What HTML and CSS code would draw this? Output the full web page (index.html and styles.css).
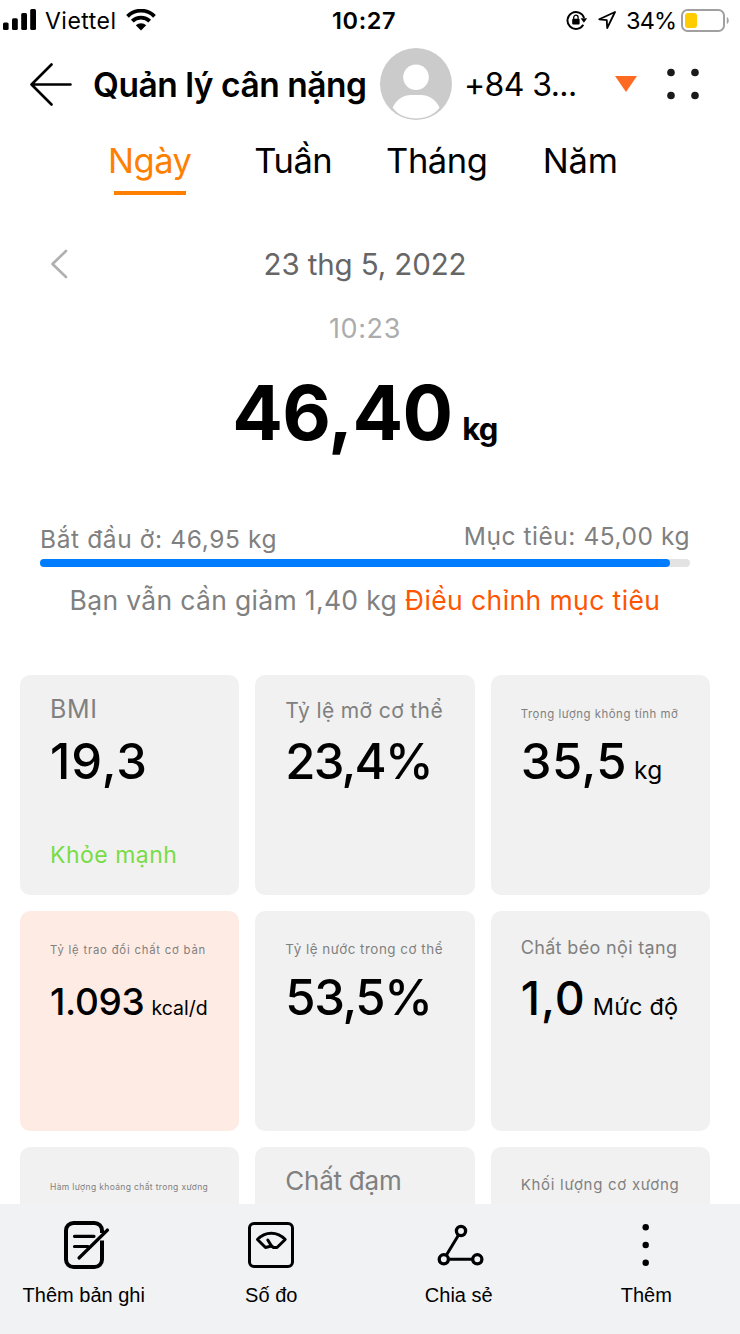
FILE: index.html
```html
<!DOCTYPE html>
<html lang="vi">
<head>
    <meta charset="UTF-8">
    <meta name="viewport" content="width=device-width, initial-scale=1.0">
    <title>Quản lý cân nặng</title>
    <link rel="stylesheet" href="styles.css">
</head>
<body>
    <div class="status-bar">
        <svg class="signal" width="33" height="22" viewBox="0 0 33 22">
            <rect x="0" y="13.5" width="5.6" height="7.5" rx="1.5"/>
            <rect x="9" y="9.3" width="5.8" height="11.7" rx="1.5"/>
            <rect x="18.2" y="4" width="5.8" height="17" rx="1.5"/>
            <rect x="27.2" y="0" width="5.8" height="21" rx="1.5"/>
        </svg>
        <span class="carrier">Viettel</span>
        <svg class="wifi" width="30" height="22" viewBox="0 0 30 22">
            <path d="M1.5 7.3a19 19 0 0 1 27 0M6.3 12.2a12.3 12.3 0 0 1 17.4 0" fill="none" stroke="#000" stroke-width="3.8"/>
            <path d="M15 21.5l-5.2-5.2a7.4 7.4 0 0 1 10.4 0z"/>
        </svg>
        <span class="clock">10:27</span>
        <svg class="rotation-lock" width="22" height="20" viewBox="0 0 22 20">
            <path d="M17.3 14.8A8.5 8.5 0 1 1 18.1 8" fill="none" stroke="#000" stroke-width="1.9"/>
            <path d="M14.6 8.200h6.600l-3.300 4.600z"/>
            <rect x="6.2" y="8.8" width="7.4" height="5.8" rx="1"/>
            <path d="M7.7 9V7.4a2.2 2.2 0 0 1 4.4 0V9" fill="none" stroke="#000" stroke-width="1.3"/>
        </svg>
        <svg class="location" width="18" height="18" viewBox="0 0 18 18">
            <path d="M17 1L1.300 8.300l7.500.9.4 7.800z" fill="none" stroke="#000" stroke-width="1.8" stroke-linejoin="round"/>
        </svg>
        <span class="battery-level">34%</span>
        <svg class="battery" width="48" height="23" viewBox="0 0 48 23">
            <rect x="1" y="1" width="42" height="21" rx="5.5" fill="none" stroke="#a0a0a0" stroke-width="2"/>
            <rect x="4" y="4" width="12" height="15" rx="3" fill="#ffcc00"/>
            <path d="M45.8 8c2.6 1 2.6 6 0 7z" fill="#a0a0a0"/>
        </svg>
    </div>

    <header class="header">
        <svg class="back" width="44" height="44" viewBox="0 0 44 44">
            <path d="M22.5 2.5L2.5 22.5l20 20M2.5 22.5H41.500" fill="none" stroke="#000" stroke-width="2.6" stroke-linecap="round" stroke-linejoin="round"/>
        </svg>
        <h1 class="title">Quản lý cân nặng</h1>
        <svg class="avatar" width="72" height="72" viewBox="0 0 72 72">
            <circle cx="36" cy="36" r="36" fill="#cbcbcb"/>
            <circle cx="36" cy="29.3" r="12.8" fill="#fff"/>
            <path d="M12.7 59.6C16 51.5 24 47 31 47h10c7 0 15 4.5 18.5 12.6-2 3.5-10 10.9-23.5 10.9S15 63.5 12.7 59.6z" fill="#fff"/>
        </svg>
        <span class="phone">+84 3...</span>
        <svg class="caret" width="22" height="16" viewBox="0 0 22 16">
            <path d="M0 0h22L11 16z" fill="#ff6a22"/>
        </svg>
        <svg class="grid-menu" width="32" height="32" viewBox="0 0 32 32" fill="#1a1a1a">
            <circle cx="4" cy="4.5" r="3.8"/>
            <circle cx="28" cy="4.5" r="3.8"/>
            <circle cx="4" cy="27.5" r="3.8"/>
            <circle cx="28" cy="27.5" r="3.8"/>
        </svg>
    </header>

    <nav class="tabs">
        <a class="tab active">Ngày</a>
        <a class="tab">Tuần</a>
        <a class="tab">Tháng</a>
        <a class="tab year">Năm</a>
    </nav>

    <main class="content">
        <div class="date-row">
            <svg class="prev" width="18" height="30" viewBox="0 0 18 30">
                <path d="M16 2L2.5 15 16 28" fill="none" stroke="#b0b0b0" stroke-width="2.6" stroke-linecap="round" stroke-linejoin="round"/>
            </svg>
            <span class="date">23 thg 5, 2022</span>
        </div>
        <div class="time">10:23</div>
        <div class="weight">46,40<span class="weight-unit">kg</span></div>

        <div class="goal-labels">
            <span class="goal-start">Bắt đầu ở: 46,95 kg</span>
            <span class="goal-target">Mục tiêu: 45,00 kg</span>
        </div>
        <div class="progress"><div class="progress-fill" style="width: 96.9%"></div></div>
        <p class="goal-text">Bạn vẫn cần giảm 1,40 kg <a class="goal-link">Điều chỉnh mục tiêu</a></p>

        <div class="cards">
            <div class="card">
                <div class="label"><span class="bmi">BMI</span></div>
                <div class="value"><span class="wide">19,3</span></div>
                <div class="state">Khỏe mạnh</div>
            </div>
            <div class="card">
                <div class="label"><span class="body-fat">Tỷ lệ mỡ cơ thể</span></div>
                <div class="value"><span class="percent">23,4%</span></div>
            </div>
            <div class="card">
                <div class="label"><span class="lean-mass">Trọng lượng không tính mỡ</span></div>
                <div class="value"><span class="kilos">35,5</span><span class="unit">kg</span></div>
            </div>
            <div class="card alert">
                <div class="label"><span class="bmr">Tỷ lệ trao đổi chất cơ bản</span></div>
                <div class="value"><span class="calories">1.093</span><span class="unit unit-kcal">kcal/d</span></div>
            </div>
            <div class="card">
                <div class="label"><span class="water">Tỷ lệ nước trong cơ thể</span></div>
                <div class="value"><span class="percent water-value">53,5%</span></div>
            </div>
            <div class="card">
                <div class="label"><span class="visceral">Chất béo nội tạng</span></div>
                <div class="value"><span class="level">1,0</span><span class="unit unit-level">Mức độ</span></div>
            </div>
            <div class="card">
                <div class="label"><span class="bone">Hàm lượng khoáng chất trong xương</span></div>
            </div>
            <div class="card">
                <div class="label"><span class="protein">Chất đạm</span></div>
            </div>
            <div class="card">
                <div class="label"><span class="muscle">Khối lượng cơ xương</span></div>
            </div>
        </div>
    </main>

    <footer class="bottom-nav">
        <a class="nav-item">
            <svg width="60" height="60" viewBox="0 0 60 60" fill="none" stroke="#000" stroke-width="4" stroke-linecap="round">
                <path d="M48 19V16.5a7.500 7.500 0 0 0-7.500-7.500H19.500a7.500 7.500 0 0 0-7.500 7.500v29a7.500 7.500 0 0 0 7.500 7.500h21a7.500 7.500 0 0 0 7.500-7.500V26.500" stroke-linecap="butt"/>
                <path d="M20.500 22.300H40M20.500 32.500H34" stroke-width="3.2"/>
                <path d="M53.500 16L25 44" stroke-width="3.2"/>
            </svg>
            <span>Thêm bản ghi</span>
        </a>
        <a class="nav-item">
            <svg width="60" height="60" viewBox="0 0 60 60" fill="none" stroke="#000" stroke-width="3" stroke-linecap="round" stroke-linejoin="round">
                <rect x="8.5" y="9.5" width="43" height="43" rx="4.5"/>
                <path d="M16.500 25.500C24 17 36.500 17 44.200 25.500L36 33.500H32.500L30.500 32 24.500 33.500z"/>
                <path d="M26.800 26L30.500 32"/>
            </svg>
            <span>Số đo</span>
        </a>
        <a class="nav-item">
            <svg width="60" height="60" viewBox="0 0 60 60" fill="none" stroke="#000" stroke-width="3.3">
                <circle cx="32" cy="17" r="4.6"/>
                <circle cx="14.800" cy="45.300" r="4.600"/>
                <circle cx="48.300" cy="45.300" r="4.600"/>
                <path d="M29.400 21.200L17.300 41.200M20 45.300H43.300" stroke-width="3"/>
            </svg>
            <span>Chia sẻ</span>
        </a>
        <a class="nav-item">
            <svg width="60" height="60" viewBox="0 0 60 60">
                <circle cx="29.700" cy="13.300" r="3.200"/>
                <circle cx="29.700" cy="31" r="3.200"/>
                <circle cx="29.700" cy="48.700" r="3.200"/>
            </svg>
            <span>Thêm</span>
        </a>
    </footer>
</body>
</html>
```
FILE: styles.css
```css
body {
    margin: 0;
    width: 740px;
    height: 1334px;
    overflow: hidden;
    background-color: #fff;
    color: #000;
    font-family: Inter, "Liberation Sans", sans-serif;
}
svg {
    display: block;
    flex: none;
}

/* status bar */
.status-bar {
    display: flex;
    align-items: center;
    height: 40px;
    line-height: 38px;
    white-space: nowrap;
}
.status-bar span {
    padding-top: 2px;
}
.signal {
    margin-left: 3px;
}
.carrier {
    width: 73px;
    margin-left: 9px;
    font-size: 23px;
    letter-spacing: 0.5px;
}
.wifi {
    margin-left: 8px;
}
.clock {
    width: 65px;
    margin-left: 176px;
    font-size: 23.5px;
    font-weight: 600;
    letter-spacing: 0.6px;
}
.rotation-lock {
    margin-left: 169px;
}
.location {
    margin-left: 10px;
}
.battery-level {
    width: 51px;
    margin-left: 10px;
    font-size: 23.5px;
    letter-spacing: -0.85px;
}
.battery {
    margin-left: 4px;
}

/* header */
.header {
    display: flex;
    align-items: center;
    height: 88px;
    white-space: nowrap;
}
.back {
    margin: 0 0 0 29px;
}
.title {
    width: 274px;
    margin: 1px 0 0 20px;
    font-size: 33.5px;
    font-weight: 600;
    letter-spacing: -0.47px;
}
.avatar {
    margin-left: 13px;
}
.phone {
    width: 115px;
    margin-left: 12px;
    font-size: 32px;
    letter-spacing: -0.6px;
}
.caret {
    margin-left: 36px;
}
.grid-menu {
    margin-left: 30px;
}

/* period tabs */
.tabs {
    display: grid;
    grid-template-columns: repeat(4, 143.5px);
    height: 67px;
    margin-left: 78px;
}
.tab {
    font-size: 34.5px;
    line-height: 66px;
    letter-spacing: -0.45px;
    text-align: center;
}
.tab.year {
    letter-spacing: -0.2px;
}
.tab.active {
    color: #ff8000;
}
.tab.active::after {
    content: "";
    display: block;
    width: 72px;
    height: 4px;
    margin: -3px auto 0;
    background-color: #ff8000;
}

.content {
    width: 730px;
}
.date-row {
    display: flex;
    justify-content: center;
    position: relative;
    margin-top: 49px;
    color: #666;
    font-size: 29.5px;
    line-height: 41px;
    letter-spacing: -0.12px;
}
.prev {
    position: absolute;
    left: 50px;
    top: 5px;
}
.time {
    margin-top: 26px;
    color: #acacac;
    font-size: 27px;
    line-height: 36px;
    letter-spacing: 0.6px;
    text-align: center;
}
.weight {
    margin-top: 21px;
    font-size: 75px;
    font-weight: 700;
    line-height: 90px;
    letter-spacing: -0.7px;
    text-align: center;
}
.weight-unit {
    margin-left: 10px;
    font-size: 31px;
    line-height: 1;
}

/* goal */
.goal-labels {
    display: flex;
    justify-content: space-between;
    height: 39px;
    margin: 62px 40px 0;
    color: #808080;
    font-size: 24.5px;
    letter-spacing: 0.62px;
}
.goal-start {
    line-height: 38px;
}
.goal-target {
    line-height: 32px;
    letter-spacing: 0.55px;
}
.progress {
    height: 8px;
    margin: 0 40px;
    border-radius: 4px;
    background-color: #e3e3e3;
}
.progress-fill {
    height: 8px;
    border-radius: 4px;
    background-color: #007dff;
}
.goal-text {
    margin: 13px 0 0;
    color: #808080;
    font-size: 26.5px;
    line-height: 41px;
    letter-spacing: 0.33px;
    text-align: center;
    white-space: nowrap;
}
.goal-link {
    color: #ff5500;
    letter-spacing: 0.41px;
}

/* measurement cards */
.cards {
    display: grid;
    grid-template-columns: repeat(3, 1fr);
    grid-auto-rows: 220px;
    gap: 16px;
    margin: 54px 20px 0;
}
.card {
    box-sizing: border-box;
    padding: 14px 0 0 30px;
    border-radius: 10px;
    background-color: #f1f1f1;
    white-space: nowrap;
}
.card.alert {
    background-color: #feebe4;
}
.label {
    height: 40px;
    color: #808080;
    font-size: 26px;
    line-height: 40px;
}
.label span,
.value span {
    line-height: 1;
}
.value {
    height: 60px;
    margin-top: 3px;
    font-size: 49px;
    font-weight: 500;
    line-height: 60px;
}
.value .unit {
    margin-left: 7px;
    font-size: 24.5px;
    font-weight: 400;
    letter-spacing: 0.4px;
}
.state {
    margin-top: 48px;
    color: #78dc46;
    font-size: 23px;
    line-height: 30px;
    letter-spacing: 0.5px;
}

/* titles shrink to fit the card width */
.bmi { font-size: 25px; letter-spacing: 0.7px; }
.body-fat { font-size: 21px; letter-spacing: 0.38px; }
.lean-mass { font-size: 11.4px; letter-spacing: 0.53px; }
.bmr { font-size: 11.3px; letter-spacing: 0.8px; }
.water { font-size: 13.4px; letter-spacing: 0.52px; }
.visceral { font-size: 18px; letter-spacing: 0.35px; }
.bone { font-size: 8.5px; letter-spacing: 0.36px; }
.protein { font-size: 26px; letter-spacing: -0.25px; }
.muscle { font-size: 15px; letter-spacing: 0.72px; }

.wide { letter-spacing: 0.9px; }
.percent { letter-spacing: -1.8px; }
.water-value { letter-spacing: -1.4px; }
.kilos { letter-spacing: 0.5px; }
.calories { font-size: 37px; letter-spacing: -0.3px; }
.level { font-size: 46.5px; letter-spacing: 1px; }
.value .unit-kcal { font-size: 19.5px; letter-spacing: 0; }
.value .unit-level { font-size: 23.5px; letter-spacing: 0.2px; }

/* bottom navigation */
.bottom-nav {
    position: fixed;
    left: -10px;
    bottom: 0;
    display: grid;
    grid-template-columns: repeat(4, 187.5px);
    box-sizing: border-box;
    width: 750px;
    height: 130px;
    padding-top: 10px;
    background-color: #f1f2f4;
}
.nav-item {
    display: flex;
    flex-direction: column;
    align-items: center;
    gap: 7px;
    font-family: "Liberation Sans", Arial, sans-serif;
    font-size: 20px;
    line-height: 28px;
}
```
